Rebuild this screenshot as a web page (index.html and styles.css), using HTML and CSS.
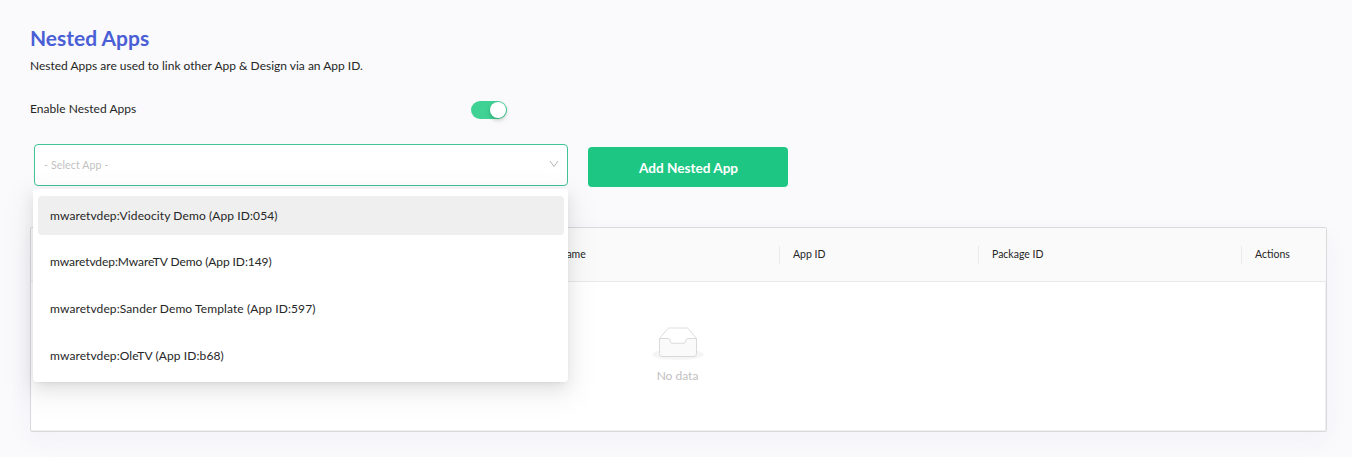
FILE: index.html
```html
<!DOCTYPE html>
<html lang="en">
<head>
<meta charset="utf-8">
<title>Nested Apps</title>
<link rel="stylesheet" href="styles.css">
</head>
<body>
<main class="page">
  <h1 class="title">Nested Apps</h1>
  <p class="intro">Nested Apps are used to link other App &amp; Design via an App ID.</p>
  <div class="enable-row">
    <span class="enable-label">Enable Nested Apps</span>
    <span class="switch"><span class="switch-handle"></span></span>
  </div>
  <div class="form-row">
    <div class="select">
      <span class="placeholder">- Select App -</span>
      <svg class="chevron" width="10" height="10" viewBox="0 0 10 10" fill="none" stroke="#b5b5b5" stroke-width="1"><path d="M1 2 5 7.5 9 2"/></svg>
      <div class="dropdown">
        <div class="option selected">mwaretvdep:Videocity Demo (App ID:054)</div>
        <div class="option option-tight">mwaretvdep:MwareTV Demo (App ID:149)</div>
        <div class="option">mwaretvdep:Sander Demo Template (App ID:597)</div>
        <div class="option">mwaretvdep:OleTV (App ID:b68)</div>
      </div>
    </div>
    <button class="add-button">Add Nested App</button>
  </div>
  <section class="table">
    <div class="table-head">
      <div class="cell">App Name</div>
      <div class="cell">App ID</div>
      <div class="cell">Package ID</div>
      <div class="cell">Actions</div>
    </div>
    <div class="empty">
      <svg class="empty-icon" width="52" height="33" viewBox="0 0 52 33" fill="none">
        <ellipse fill="#f5f5f5" cx="26" cy="27.5" rx="26" ry="5.5"/>
        <path fill="#fff" stroke="#dedede" d="M7.5 11.5 15.8 1.6Q16.3 1 17 1H35Q35.700 1 36.200 1.600L44.500 11.500V19H7.500Z"/>
        <path fill="#fafafa" stroke="#d9d9d9" d="M33.800 13.900C33.800 12.600 34.600 11.500 35.600 11.500H44.500V26.500Q44.500 29.500 42 29.500H10Q7.500 29.500 7.500 26.500V11.500H16.400C17.400 11.500 18.200 12.600 18.200 13.900S19 16.200 20 16.200H32C33 16.200 33.800 15.200 33.800 13.900Z"/>
      </svg>
      <span class="empty-text">No data</span>
    </div>
  </section>
</main>
</body>
</html>
```
FILE: styles.css
```css
* { box-sizing: border-box; }
body {
  margin: 0;
  height: 457px;
  overflow: hidden;
  background: #fafafc;
  color: #262626;
  font: 12px/20px Lato, "Noto Sans", sans-serif;
}
.page { padding: 24px 25px 0 30px; }
.title { margin: 0; font-size: 21px; line-height: 28px; font-weight: 700; color: #4a5fd5; }
.intro { margin: 4px 0 0; }
.enable-row { display: flex; align-items: center; margin-top: 23px; height: 22px; }
.enable-label { width: 441px; padding-bottom: 2px; letter-spacing: .04px; }
.switch { width: 36px; height: 18px; padding: 1px; border-radius: 9px; background: #40d295; display: flex; justify-content: flex-end; }
.switch-handle { width: 16px; height: 16px; border-radius: 50%; background: #fff; box-shadow: 0 2px 4px rgba(0, 35, 11, .25); }
.form-row { display: flex; align-items: flex-start; gap: 20px; padding: 23px 0 0 4px; }
.select {
  position: relative;
  display: flex;
  align-items: center;
  justify-content: space-between;
  width: 534px;
  height: 42px;
  padding: 0 8px 0 9px;
  border: 1px solid #40c397;
  border-radius: 4px;
  background: #fff;
}
.placeholder { font-size: 10.5px; letter-spacing: .15px; color: #bfbfbf; }
.chevron { margin-top: -3px; }
.dropdown {
  position: absolute;
  z-index: 2;
  top: 44px;
  left: -2px;
  width: 535px;
  height: 193px;
  padding: 7px 4px 0 5px;
  border-radius: 2px 2px 4px 4px;
  background: #fff;
  box-shadow: 0 3px 6px -4px rgba(0, 0, 0, .12), 0 6px 16px rgba(0, 0, 0, .08), 0 9px 28px 8px rgba(0, 0, 0, .05);
}
.option { height: 39px; margin-bottom: 7.7px; padding: 0 12px; line-height: 40px; letter-spacing: .1px; border-radius: 4px; white-space: nowrap; }
.option-tight { line-height: 38px; letter-spacing: -.08px; }
.selected { background: #efefef; }
.add-button {
  width: 200px;
  height: 40px;
  margin-top: 3px;
  padding: 2px 0 0 1px;
  border: 0;
  border-radius: 4px;
  background: #1dc783;
  color: #fff;
  font: 700 13.6px/20px Lato, sans-serif;
}
.table {
  height: 205px;
  margin-top: 40px;
  border: 1px solid #d9d9dc;
  border-radius: 2px;
  background: #fff;
  box-shadow: inset -1px -1px 0 #f0f0f2, 0 8px 26px rgba(70, 60, 160, .045);
}
.table-head { display: grid; grid-template-columns: 748px 199px 263px 1fr; align-items: center; height: 54px; border-bottom: 1px solid #eaeaea; background: #fafafa; font-size: 10.5px; line-height: 17px; }
.cell { height: 18px; padding-left: 13px; border-left: 1px solid #ebebeb; }
.cell:first-child { padding-left: 506px; border: 0; }
.empty { display: flex; flex-direction: column; align-items: center; padding: 45px 2px 0 0; }
.empty-text { margin-top: 6px; color: #bfbfbf; }
.empty-icon { display: block; }
```
